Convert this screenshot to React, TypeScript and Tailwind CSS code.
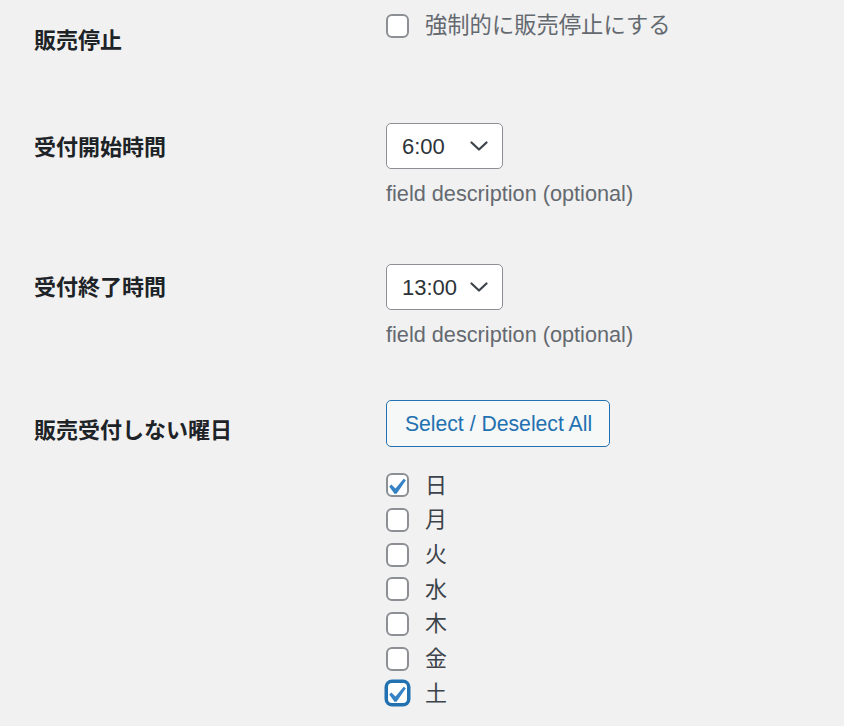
import { ReactNode } from "react"

const font = "font-['Liberation_Sans','Noto_Sans_CJK_JP',sans-serif]"

function Checkbox({ checked = false, focused = false }: { checked?: boolean; focused?: boolean }) {
  return (
    <span
      className={`relative inline-block w-[23px] h-[24px] rounded-[6px] bg-white shrink-0 ${
        focused
          ? "border-[2.5px] border-[#2271b1] shadow-[0_0_0_1.5px_#2271b1]"
          : "border-2 border-[#8c8f94]"
      }`}
    >
      {checked && (
        <svg className="absolute left-[-8px] top-[-4px] w-[32px] h-[32px]" viewBox="0 0 20 20">
          <path d="M14.83 4.89l1.34.94-5.81 8.38H9.02L5.78 9.67l1.34-1.25 2.57 2.57z" fill="#3582c4" />
        </svg>
      )}
    </span>
  )
}

function Select({ value }: { value: string }) {
  return (
    <div className="flex items-center justify-between h-[46px] w-[117px] pl-[15px] pr-[14px] bg-white border-[1.5px] border-[#8c8f94] rounded-[5px] text-[22px] text-[#2c3338]">
      <span>{value}</span>
      <svg width="18" height="10" viewBox="0 0 18 10" fill="none">
        <path d="M1.5 1.5l7.5 7 7.5-7" stroke="#3c434a" strokeWidth="2.2" strokeLinecap="round" strokeLinejoin="round" />
      </svg>
    </div>
  )
}

function Row({
  label,
  labelPad,
  fieldPad,
  height,
  children,
}: {
  label: string
  labelPad: string
  fieldPad: string
  height: string
  children: ReactNode
}) {
  return (
    <div className={`flex ${height}`}>
      <div className={`w-[352px] shrink-0 ${labelPad} text-[22px] leading-[30px] font-bold text-[#1d2327]`}>
        {label}
      </div>
      <div className={fieldPad}>{children}</div>
    </div>
  )
}

const days = [
  { name: "日", checked: true },
  { name: "月", checked: false },
  { name: "火", checked: false },
  { name: "水", checked: false },
  { name: "木", checked: false },
  { name: "金", checked: false },
  { name: "土", checked: true, focused: true },
]

export default function App() {
  return (
    <div className={`min-h-screen bg-[#f1f1f1] pl-[34px] ${font}`}>
      <Row label="販売停止" labelPad="pt-[26px]" fieldPad="pt-[13px]" height="h-[100px]">
        <label className="flex items-center gap-[16px] h-[26px]">
          <Checkbox />
          <span className="text-[22.3px] leading-[26px] text-[#646970]">強制的に販売停止にする</span>
        </label>
      </Row>

      <Row label="受付開始時間" labelPad="pt-[33px]" fieldPad="pt-[23px]" height="h-[141px]">
        <Select value="6:00" />
        <p className="mt-[11px] text-[21.7px] leading-[28px] text-[#646970]">field description (optional)</p>
      </Row>

      <Row label="受付終了時間" labelPad="pt-[32px]" fieldPad="pt-[23px]" height="h-[136px]">
        <Select value="13:00" />
        <p className="mt-[11px] text-[21.7px] leading-[28px] text-[#646970]">field description (optional)</p>
      </Row>

      <Row label="販売受付しない曜日" labelPad="pt-[39px]" fieldPad="pt-[23px]" height="h-auto">
        <button className="h-[47px] w-[224px] pl-[1px] bg-[#f6f7f7] border-[1.5px] border-[#2271b1] rounded-[5px] text-[21.2px] text-[#2271b1]">
          Select / Deselect All
        </button>
        <div className="mt-[21px] flex flex-col">
          {days.map((d) => (
            <label key={d.name} className="flex items-center gap-[16px] h-[34.67px]">
              <Checkbox checked={d.checked} focused={d.focused} />
              <span className="text-[22px] text-[#3c434a]">{d.name}</span>
            </label>
          ))}
        </div>
      </Row>
    </div>
  )
}
